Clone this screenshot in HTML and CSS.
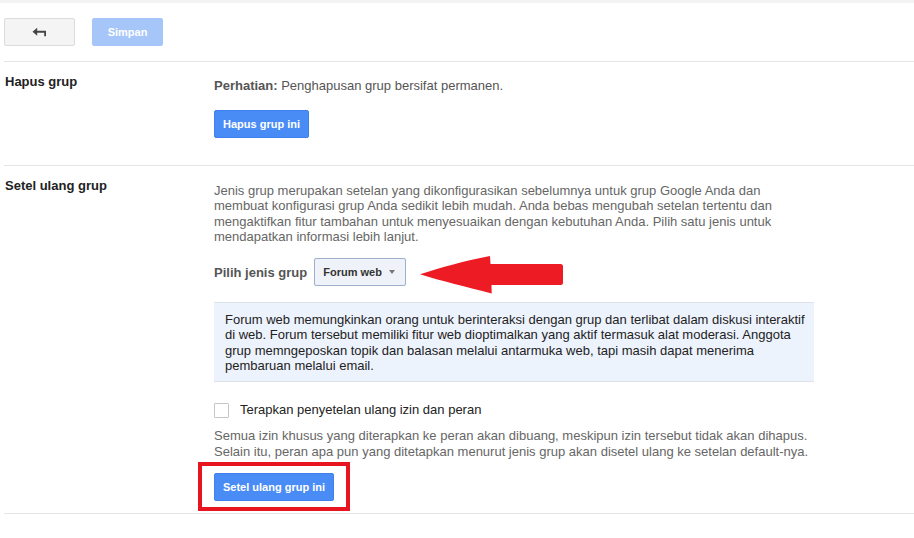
FILE: index.html
```html
<!DOCTYPE html>
<html lang="id">
<head>
<meta charset="utf-8">
<title>Setelan grup</title>
<link rel="stylesheet" href="styles.css">
</head>
<body>
<div class="topband"></div>
<div class="page">
  <div class="toolbar">
    <button class="btn btn-grey" aria-label="Kembali">
      <svg width="16" height="11" viewBox="0 0 16 11"><path d="M0.5 4.8 L5.2 0.8 L5.2 3.8 L14 3.8 L14 9.2 L12.2 9.2 L12.2 5.8 L5.2 5.8 L5.2 8.8 Z" fill="#444"/></svg>
    </button>
    <button class="btn btn-disabled">Simpan</button>
  </div>

  <div class="section sec-delete">
    <div class="label">Hapus grup</div>
    <div class="content">
      <p class="warn"><b>Perhatian:</b> Penghapusan grup bersifat permanen.</p>
      <button class="btn btn-blue btn-delete">Hapus grup ini</button>
    </div>
  </div>

  <div class="section sec-reset">
    <div class="label">Setel ulang grup</div>
    <div class="content">
      <p class="desc">Jenis grup merupakan setelan yang dikonfigurasikan sebelumnya untuk grup Google Anda dan membuat konfigurasi grup Anda sedikit lebih mudah. Anda bebas mengubah setelan tertentu dan mengaktifkan fitur tambahan untuk menyesuaikan dengan kebutuhan Anda. Pilih satu jenis untuk mendapatkan informasi lebih lanjut.</p>
      <div class="type-row">
        <span class="type-label">Pilih jenis grup</span>
        <span class="select">Forum web <span class="caret"></span></span>
        <svg class="red-arrow" width="146" height="40" viewBox="0 0 146 40"><path d="M1 19.3 C20 13 45 6 71 1 L71.5 9 L141.5 9 Q144 9 144 11.5 L144 27.5 Q144 30 141.5 30 L72.5 30 L72.7 38.5 C48 32 22 26 1 19.3 Z" fill="#ed1c24"/></svg>
      </div>
      <div class="info">Forum web memungkinkan orang untuk berinteraksi dengan grup dan terlibat dalam diskusi interaktif di web. Forum tersebut memiliki fitur web dioptimalkan yang aktif termasuk alat moderasi. Anggota grup memngeposkan topik dan balasan melalui antarmuka web, tapi masih dapat menerima pembaruan melalui email.</div>
      <label class="check-row"><span class="checkbox"></span>Terapkan penyetelan ulang izin dan peran</label>
      <p class="note">Semua izin khusus yang diterapkan ke peran akan dibuang, meskipun izin tersebut tidak akan dihapus. Selain itu, peran apa pun yang ditetapkan menurut jenis grup akan disetel ulang ke setelan default-nya.</p>
      <div class="reset-wrap">
        <button class="btn btn-blue btn-reset">Setel ulang grup ini</button>
        <span class="red-box"></span>
      </div>
    </div>
  </div>
</div>
</body>
</html>
```

FILE: styles.css
```css
html, body {
  margin: 0;
  padding: 0;
  background: #fff;
}
body {
  font-family: "Liberation Sans", Arial, sans-serif;
  font-size: 13px;
  color: #222;
  width: 914px;
  height: 538px;
  overflow: hidden;
}
p { margin: 0; }

.topband {
  height: 3px;
  background: #f3f3f3;
}
.page {
  margin-left: 4px;
}
.toolbar {
  display: flex;
  gap: 17px;
  padding: 15px 0 15px 0;
}

.btn {
  font-family: "Liberation Sans", Arial, sans-serif;
  font-size: 11px;
  font-weight: bold;
  height: 28px;
  border-radius: 2px;
  padding: 0;
  box-sizing: border-box;
  display: inline-flex;
  align-items: center;
  justify-content: center;
  white-space: nowrap;
  cursor: default;
}
.btn-grey {
  width: 71px;
  background: #f4f4f4;
  border: 1px solid #dcdcdc;
}
.btn-disabled {
  width: 71px;
  background: #a6c6f9;
  border: 1px solid #a6c6f9;
  color: #fff;
}
.btn-blue {
  background: #4a8cf6;
  border: 1px solid #3f80ec;
  color: #fff;
}

.section {
  display: grid;
  grid-template-columns: 210px 1fr;
  border-top: 1px solid #e5e5e5;
}
.label {
  font-weight: bold;
  padding: 12px 0 0 1px;
  line-height: 16px;
  color: #222;
}
.content {
  padding-top: 16px;
  width: 600px;
}

.sec-delete { padding-bottom: 27px; }
.warn {
  color: #555;
  line-height: 16px;
}
.btn-delete {
  margin-top: 16px;
  width: 95px;
}

.sec-reset {
  padding-bottom: 12px;
  border-bottom: 1px solid #e5e5e5;
}
.desc {
  color: #666;
  line-height: 15.3px;
  width: 570px;
  margin-top: 1px;
}
.type-row {
  position: relative;
  display: flex;
  align-items: center;
  gap: 7px;
  margin-top: 14px;
  height: 28px;
}
.type-label {
  font-weight: bold;
  color: #555;
}
.select {
  width: 92px;
  height: 28px;
  box-sizing: border-box;
  border: 1px solid #9db0cb;
  border-radius: 2px;
  background: #eff3f9;
  font-size: 11px;
  font-weight: bold;
  color: #333;
  display: inline-flex;
  align-items: center;
  padding-left: 8px;
  gap: 7px;
}
.caret {
  width: 0;
  height: 0;
  border-left: 3.5px solid transparent;
  border-right: 3.5px solid transparent;
  border-top: 4px solid #777;
}
.red-arrow {
  position: absolute;
  left: 205px;
  top: -3px;
}

.info {
  margin-top: 16px;
  background: #edf3fd;
  border-top: 1px solid #dde2ea;
  border-bottom: 1px solid #dde2ea;
  padding: 9px 2px 8px 11px;
  line-height: 15.3px;
  color: #222;
}

.check-row {
  display: flex;
  align-items: center;
  gap: 11px;
  margin-top: 20px;
  line-height: 16px;
  color: #222;
}
.checkbox {
  width: 15px;
  height: 15px;
  box-sizing: border-box;
  border: 1px solid #c6c6c6;
  border-radius: 1px;
  background: #fff;
}
.note {
  margin-top: 10px;
  color: #666;
  line-height: 15.3px;
}

.reset-wrap {
  position: relative;
  margin-top: 14px;
  display: inline-block;
  vertical-align: top;
}
.btn-reset {
  width: 120px;
  display: flex;
}
.red-box {
  position: absolute;
  left: -16px;
  top: -11px;
  width: 152px;
  height: 49px;
  box-sizing: border-box;
  border: 4px solid #e8141f;
}
```
